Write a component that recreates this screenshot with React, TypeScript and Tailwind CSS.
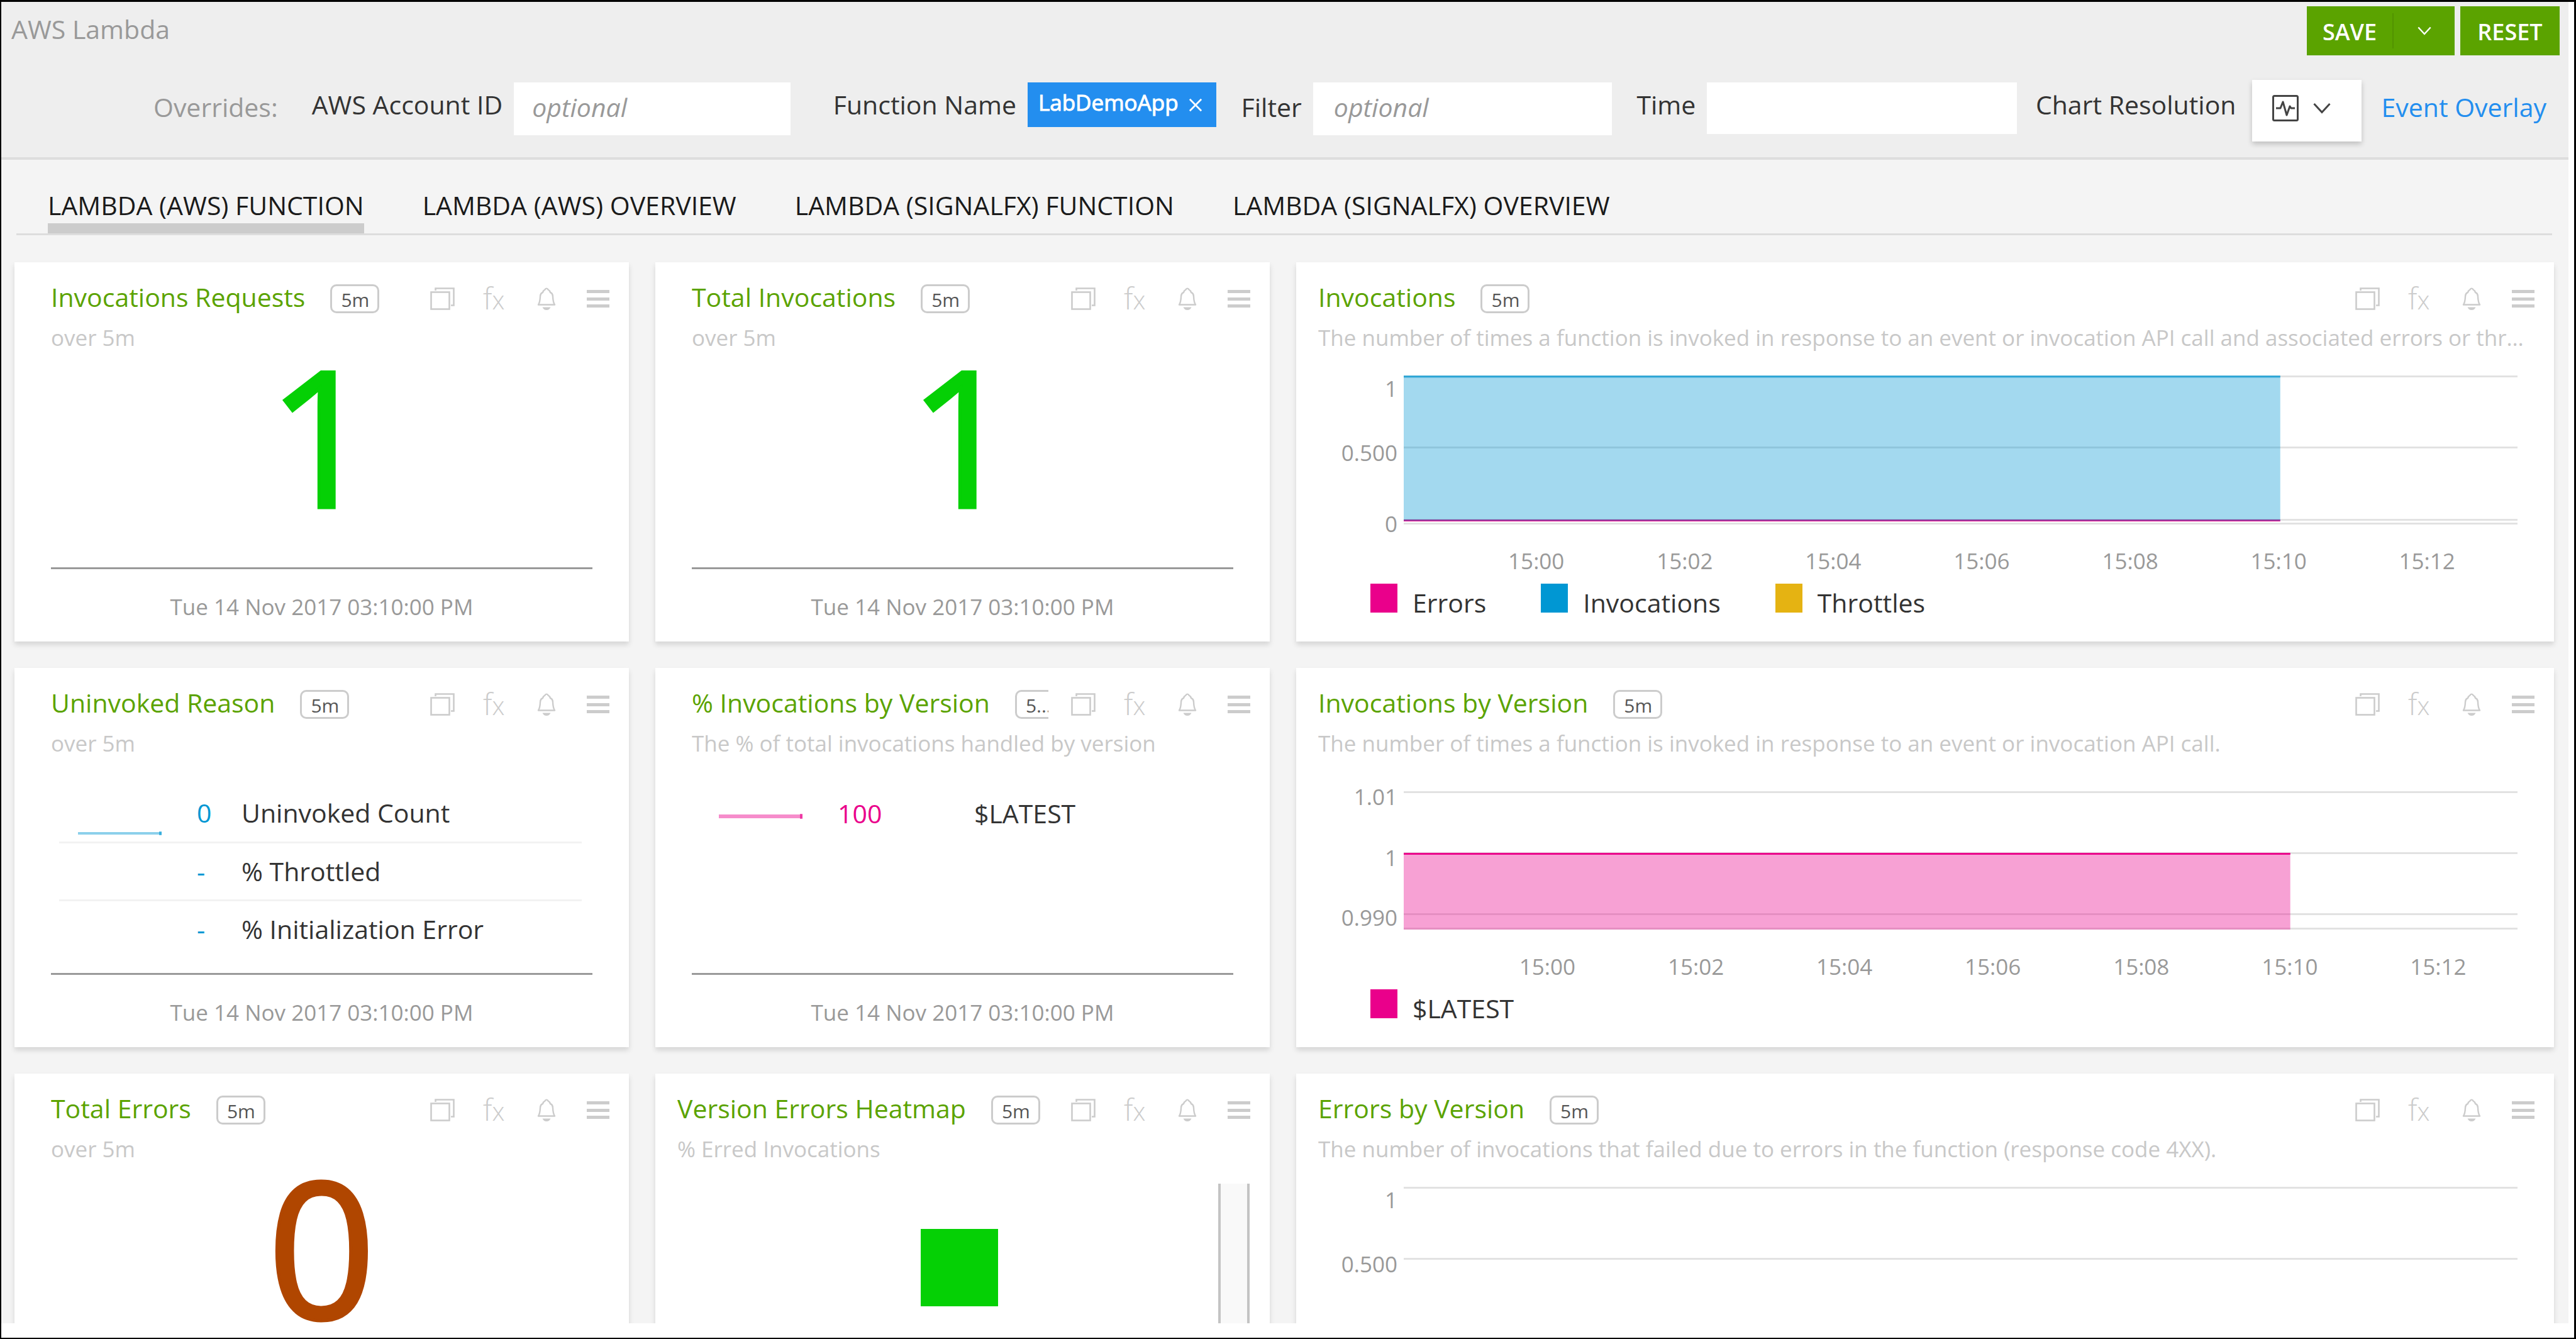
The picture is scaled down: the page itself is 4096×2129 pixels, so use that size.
import type { ReactNode } from "react";

function CopyIcon() {
  return (
    <svg className="h-9 w-[39px]" viewBox="0 0 39 36" fill="none" stroke="currentColor" strokeWidth="2.6">
      <rect x="1.5" y="7.5" width="29" height="27" />
      <path d="M8.5 5V1.5H37.5V28.5H33" />
    </svg>
  );
}

function BellIcon() {
  return (
    <svg className="h-9 w-[30px]" viewBox="0 0 30 36" fill="none" stroke="currentColor" strokeWidth="2.4" strokeLinejoin="round">
      <path d="M2 27.500C4 24.500 4.800 19 5 14.500C5.200 10.500 6.500 8.800 9 8C9.500 6 10.500 4.500 12.500 3.500C13.500 1 16.500 1 17.500 3.500C19.500 4.500 20.500 6 21 8C23.500 8.800 24.800 10.500 25 14.500C25.200 19 26 24.500 28 27.500Z" />
      <path d="M8.500 31.500H21.500C20 34.500 18 36 15 36S10 34.500 8.500 31.500Z" fill="currentColor" stroke="none" />
    </svg>
  );
}

function MenuIcon() {
  return (
    <svg className="h-7 w-9" viewBox="0 0 36 28" fill="currentColor">
      <rect width="36" height="5" y="0" />
      <rect width="36" height="5" y="12" />
      <rect width="36" height="5" y="23" />
    </svg>
  );
}

function Chevron({ className }: { className: string }) {
  return (
    <svg className={className} viewBox="0 0 28 18" fill="none" stroke="currentColor" strokeWidth="3">
      <path d="M1.500 2L14 15.500L26.500 2" />
    </svg>
  );
}

function Card({
  title,
  interval = "5m",
  subtitle,
  wide = false,
  children,
}: {
  title: string;
  interval?: string;
  subtitle: string;
  wide?: boolean;
  children: ReactNode;
}) {
  return (
    <section className="flex h-[603px] min-w-0 flex-col bg-white shadow-[0_5px_8px_rgba(0,0,0,0.13)]">
      <div className={wide ? "pt-[35px] pr-[31px] pl-[35px]" : "pt-[35px] pr-[31px] pl-[58px]"}>
        <div className="flex h-[46px] items-start text-[#ccc]">
          <div className="-my-2 mr-9 flex min-w-0 flex-1 items-start gap-[40px] overflow-hidden py-2">
            <h2 className="shrink-0 text-[41px] leading-[40px] whitespace-nowrap text-[#5ba300]">{title}</h2>
            <span className="h-[46px] w-[78px] shrink-0 rounded-[10px] border-[3px] border-[#ccc] pl-3.5 text-[30px] leading-[43px] text-[#555]">
              {interval}
            </span>
          </div>
          <div className="flex h-[46px] shrink-0 items-center">
            <button type="button" aria-label="Copy chart" className="mr-[45px]">
              <CopyIcon />
            </button>
            <button
              type="button"
              aria-label="Functions"
              className="mr-[52px] flex w-[34px] items-baseline text-[48px] leading-[46px] font-light"
            >
              f<span className="text-[40px]">x</span>
            </button>
            <button type="button" aria-label="Alerts" className="mr-[49px]">
              <BellIcon />
            </button>
            <button type="button" aria-label="Chart menu">
              <MenuIcon />
            </button>
          </div>
        </div>
        <p className="mt-[14px] truncate text-[35px] leading-[50px] text-[#c8c8c8]">{subtitle}</p>
      </div>
      {children}
    </section>
  );
}

function Timestamp() {
  return (
    <div className="mx-[58px] mt-auto border-t-[3px] border-[#999] pt-1 text-center text-[35px] leading-[111px] text-[#999]">
      Tue 14 Nov 2017 03:10:00 PM
    </div>
  );
}

function BigValue({ value, className }: { value: string; className: string }) {
  return (
    <div className={`text-center text-[302px] leading-[256px] [-webkit-text-stroke:5px_currentColor] ${className}`}>{value}</div>
  );
}

function Spark({ color, y, thick }: { color: string; y: number; thick: number }) {
  return (
    <svg className="ml-[30px] h-[89px] w-[133px]" viewBox="0 0 133 89">
      <rect x="0" y={y} width="133" height={thick} fill={color} opacity="0.45" />
      <rect x="129" y={y - 1} width="4" height={thick + 2} fill={color} opacity="0.6" />
    </svg>
  );
}

type Row = { spark?: ReactNode; value: string; name: string };

function ValueList({ rows, color, valueWidth }: { rows: Row[]; color: string; valueWidth: string }) {
  return (
    <div className="mr-[75px] ml-[71px] pt-[40px]">
      <table className="w-full table-fixed text-left text-[41px] leading-[89px] text-[#333]">
        <colgroup>
          <col className="w-[219px]" />
          <col className={valueWidth} />
          <col />
        </colgroup>
        <tbody>
          {rows.map((r) => (
            <tr key={r.name} className="h-[92px] border-b-[3px] border-[#f2f2f2] last:border-b-0">
              <td>{r.spark}</td>
              <td className={color}>{r.value}</td>
              <td className="whitespace-nowrap">{r.name}</td>
            </tr>
          ))}
        </tbody>
      </table>
    </div>
  );
}

type YTick = { label: string; line: number; text: number };

function Chart({ yTicks, axis, xStart, children }: { yTicks: YTick[]; axis: number; xStart: number; children?: ReactNode }) {
  const times = ["15:00", "15:02", "15:04", "15:06", "15:08", "15:10", "15:12"];
  return (
    <div className="pr-[58px] pl-[171px]">
      <svg className="block h-[366px] w-full overflow-visible">
        {yTicks.map((t) => (
          <g key={t.label}>
            <rect x="0" y={t.line} width="100%" height="3" fill="#e2e2e2" />
            <text x="-10" y={t.text} textAnchor="end" fontSize="35" fill="#999">
              {t.label}
            </text>
          </g>
        ))}
        <rect x="0" y={axis} width="100%" height="3" fill="#e2e2e2" />
        {children}
        {times.map((t, i) => (
          <text key={t} x={`${xStart + i * 13.33}%`} y="343" textAnchor="middle" fontSize="35" fill="#999">
            {t}
          </text>
        ))}
      </svg>
    </div>
  );
}

function Legend({ items }: { items: { name: string; swatch: string }[] }) {
  return (
    <ul className="flex gap-[87px] pl-[118px] text-[41px] leading-[60px] text-[#333]">
      {items.map((i) => (
        <li key={i.name} className="flex gap-6">
          <span className={`h-[46px] w-[43px] ${i.swatch}`} />
          {i.name}
        </li>
      ))}
    </ul>
  );
}

const unitTicks: YTick[] = [
  { label: "1", line: 35, text: 69 },
  { label: "0.500", line: 148, text: 171 },
  { label: "0", line: 263, text: 284 },
];

const tabs = ["LAMBDA (AWS) FUNCTION", "LAMBDA (AWS) OVERVIEW", "LAMBDA (SIGNALFX) FUNCTION", "LAMBDA (SIGNALFX) OVERVIEW"];

export default function App() {
  return (
    <div className="flex h-screen flex-col overflow-hidden border-t-[3px] border-r-[3px] border-b-2 border-l-2 border-black bg-white pr-[9px] pb-[23px] font-['Open_Sans',sans-serif]">
      <header className="border-b-4 border-[#ddd] bg-[#eee]">
        <div className="flex items-start justify-between pr-[14px] pl-4">
          <h1 className="text-[41px] leading-[86px] text-[#999]">AWS Lambda</h1>
          <div className="flex gap-[9px] pt-[7px] text-[36px] font-semibold text-white">
            <div className="flex h-[78px] items-center bg-[#5ba300]">
              <button type="button" className="h-[56px] w-[138px] border-r-2 border-[#529300] pt-1 leading-[52px]">
                SAVE
              </button>
              <button type="button" aria-label="Save options" className="flex h-[56px] w-[97px] items-center justify-center">
                <Chevron className="h-[14px] w-[22px]" />
              </button>
            </div>
            <button type="button" className="h-[78px] w-[158px] bg-[#5ba300] pt-1">
              RESET
            </button>
          </div>
        </div>

        <div className="flex items-start pt-[42px] pr-[35px] pb-[25px] pl-[242px] text-[41px] whitespace-nowrap text-[#333]">
          <span className="mr-[54px] leading-[78px] text-[#999]">Overrides:</span>
          <label htmlFor="account" className="mr-[18px] leading-[70px]">
            AWS Account ID
          </label>
          <input
            id="account"
            placeholder="optional"
            className="mr-[68px] h-[84px] min-w-0 grow basis-[439px] bg-white pb-[6px] pl-[29px] placeholder:text-[#999] placeholder:italic"
          />
          <span className="mr-[18px] leading-[70px]">Function Name</span>
          <span className="mr-[40px] flex h-[71px] items-center gap-4 bg-[#238eef] pr-[22px] pb-[7px] pl-[17px] text-[35px] text-white [-webkit-text-stroke:1px_currentColor]">
            LabDemoApp
            <button type="button" aria-label="Remove LabDemoApp" className="pt-[8px]">
              <svg className="size-[22px]" viewBox="0 0 24 24" fill="none" stroke="currentColor" strokeWidth="3">
                <path d="M2 2L22 22M22 2L2 22" />
              </svg>
            </button>
          </span>
          <label htmlFor="filter" className="mr-[18px] leading-[78px]">
            Filter
          </label>
          <input
            id="filter"
            placeholder="optional"
            className="mr-[39px] h-[84px] min-w-0 grow basis-[475px] bg-white pb-[6px] pl-[33px] placeholder:text-[#999] placeholder:italic"
          />
          <label htmlFor="time" className="mr-[18px] leading-[70px]">
            Time
          </label>
          <input id="time" className="mr-[30px] h-[82px] min-w-0 grow basis-[492px] bg-white pl-[29px]" />
          <span className="mr-[26px] leading-[70px]">Chart Resolution</span>
          <button
            type="button"
            aria-label="Chart resolution"
            className="-mt-1 mr-[31px] flex h-[98px] w-[174px] shrink-0 items-center gap-[22px] bg-white pb-[8px] pl-[32px] text-[#444] shadow-[0_4px_8px_rgba(0,0,0,0.2)]"
          >
            <svg className="size-[42px]" viewBox="0 0 42 42" fill="none" stroke="currentColor" strokeWidth="3">
              <rect x="1.500" y="1.500" width="39" height="39" rx="2" />
              <path d="M6 21H13L17 11L23 32L28 18L30 21H36" strokeLinejoin="round" />
            </svg>
            <Chevron className="h-[18px] w-[30px]" />
          </button>
          <a href="#events" className="leading-[78px] text-[#238eef]">
            Event Overlay
          </a>
        </div>
      </header>

      <main className="min-h-0 flex-1 overflow-hidden bg-[#f4f4f4]">
        <nav className="mr-[26px] ml-6 flex gap-[93px] border-b-[3px] border-[#ddd] pt-11 pl-[50px]">
          {tabs.map((t, i) => (
            <a
              key={t}
              href={`#tab-${i + 1}`}
              className={
                i === 0
                  ? "border-b-16 border-[#ccc] text-[41px] leading-[57px] text-[#1a1a1a]"
                  : "text-[41px] leading-[57px] text-[#1a1a1a]"
              }
            >
              {t}
            </a>
          ))}
        </nav>

        <div className="grid grid-cols-[977fr_977fr_2000fr] gap-[42px] pt-[43px] pr-[23px] pl-[21px]">
          <Card title="Invocations Requests" subtitle="over 5m">
            <BigValue value="1" className="text-[#05d005]" />
            <Timestamp />
          </Card>
          <Card title="Total Invocations" subtitle="over 5m">
            <BigValue value="1" className="text-[#05d005]" />
            <Timestamp />
          </Card>
          <Card
            wide
            title="Invocations"
            subtitle="The number of times a function is invoked in response to an event or invocation API call and associated errors or throttles."
          >
            <Chart yTicks={unitTicks} axis={269} xStart={11.9}>
              <rect x="0" y="35" width="78.7%" height="230" fill="#0097d3" opacity="0.36" />
              <rect x="0" y="35" width="78.7%" height="4" fill="#0097d3" opacity="0.4" />
              <rect x="0" y="36" width="78.7%" height="1" fill="#0097d3" opacity="0.8" />
              <rect x="0" y="264" width="78.7%" height="2" fill="#8f3fa0" />
              <rect x="0" y="266" width="78.7%" height="1" fill="#e0148f" />
            </Chart>
            <Legend
              items={[
                { name: "Errors", swatch: "bg-[#ea008b]" },
                { name: "Invocations", swatch: "bg-[#0097d3]" },
                { name: "Throttles", swatch: "bg-[#e5b312]" },
              ]}
            />
          </Card>

          <Card title="Uninvoked Reason" subtitle="over 5m">
            <ValueList
              color="text-[#0097d3]"
              valueWidth="w-[71px]"
              rows={[
                { spark: <Spark color="#0097d3" y={75} thick={4} />, value: "0", name: "Uninvoked Count" },
                { value: "-", name: "% Throttled" },
                { value: "-", name: "% Initialization Error" },
              ]}
            />
            <Timestamp />
          </Card>
          <Card title="% Invocations by Version" interval="5..." subtitle="The % of total invocations handled by version">
            <ValueList
              color="text-[#ea008b]"
              valueWidth="w-[217px]"
              rows={[{ spark: <Spark color="#ea008b" y={46} thick={6} />, value: "100", name: "$LATEST" }]}
            />
            <Timestamp />
          </Card>
          <Card
            wide
            title="Invocations by Version"
            subtitle="The number of times a function is invoked in response to an event or invocation API call."
          >
            <Chart
              axis={268}
              xStart={12.9}
              yTicks={[
                { label: "1.01", line: 51, text: 73 },
                { label: "1", line: 148, text: 170 },
                { label: "0.990", line: 245, text: 265 },
              ]}
            >
              <rect x="0" y="149" width="79.6%" height="122" fill="#ea008b" opacity="0.37" />
              <rect x="0" y="149" width="79.6%" height="3" fill="#ea008b" />
            </Chart>
            <Legend items={[{ name: "$LATEST", swatch: "bg-[#ea008b]" }]} />
          </Card>

          <Card title="Total Errors" subtitle="over 5m">
            <BigValue value="0" className="text-[#b04600]" />
            <Timestamp />
          </Card>
          <Card wide title="Version Errors Heatmap" subtitle="% Erred Invocations">
            <div className="mt-[30px] mr-8 ml-[72px] flex flex-1">
              <div className="flex flex-1 justify-center pt-[72px]">
                <div className="size-[123px] bg-[#05d005]" />
              </div>
              <div className="w-[50px] border-x-4 border-[#c4c4c4] bg-[#f9f9f9]" />
            </div>
          </Card>
          <Card
            wide
            title="Errors by Version"
            subtitle="The number of invocations that failed due to errors in the function (response code 4XX)."
          >
            <Chart yTicks={unitTicks} axis={269} xStart={11.9} />
          </Card>
        </div>
      </main>
    </div>
  );
}
